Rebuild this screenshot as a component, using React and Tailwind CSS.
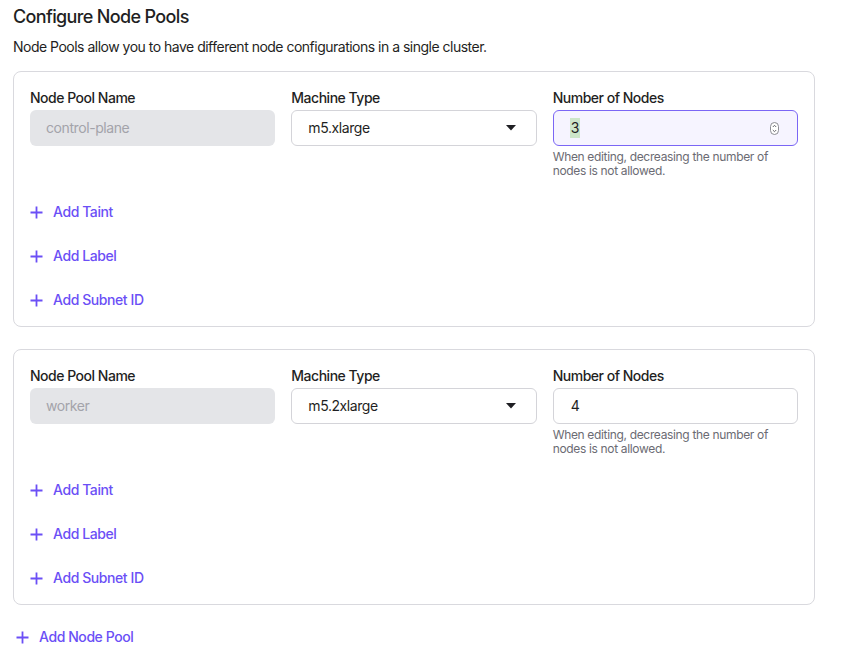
import React from "react";

const pools = [
  { name: "control-plane", machine: "m5.xlarge", nodes: "3", focused: true },
  { name: "worker", machine: "m5.2xlarge", nodes: "4", focused: false },
];

const actions = ["Add Taint", "Add Label", "Add Subnet ID"];

const Plus = () => (
  <svg width="13" height="13" viewBox="0 0 13 13" fill="none">
    <path d="M6.5 0.5v12M0.5 6.5h12" stroke="#6b4ff6" strokeWidth="1.8" />
  </svg>
);

const AddButton = ({ label }) => (
  <button className="flex h-5 w-fit items-center gap-[10px] text-sm font-medium tracking-[-0.03em] text-[#6b4ff6]">
    <Plus />
    {label}
  </button>
);

const Spinner = () => (
  <div className="flex h-[13px] w-[9px] flex-col items-center justify-center rounded-full border border-[#8d8d94] bg-white">
    <svg width="5" height="9" viewBox="0 0 5 9" fill="none">
      <path d="M0.8 3L2.5 1.3L4.2 3M0.8 6L2.5 7.7L4.2 6" stroke="#55555c" strokeWidth="0.9" />
    </svg>
  </div>
);

const PoolCard = ({ pool }) => (
  <div className="flex w-[802px] flex-col gap-6 rounded-lg border border-[#d9d9de] bg-white p-4">
    <div className="grid grid-cols-3 gap-4">
      <div className="flex flex-col">
        <label className="h-5 text-sm font-medium leading-5 tracking-[-0.035em] text-[#1f1f23]">Node Pool Name</label>
        <div className="mt-0.5 flex h-9 items-center rounded-md bg-[#e4e5e8] px-4 text-sm tracking-[-0.03em] text-[#a3a3aa]">
          {pool.name}
        </div>
      </div>
      <div className="flex flex-col">
        <label className="h-5 text-sm font-medium leading-5 tracking-[-0.035em] text-[#1f1f23]">Machine Type</label>
        <div className="mt-0.5 flex h-9 items-center justify-between rounded-md border border-[#d4d4d9] bg-white pl-4 pr-5 text-sm tracking-[-0.03em] text-[#1f1f23]">
          {pool.machine}
          <svg width="10" height="6" viewBox="0 0 10 6">
            <path d="M0 0h10L5 5.5z" fill="#1f1f23" />
          </svg>
        </div>
      </div>
      <div className="flex flex-col">
        <label className="h-5 text-sm font-medium leading-5 tracking-[-0.035em] text-[#1f1f23]">Number of Nodes</label>
        {pool.focused ? (
          <div className="mt-0.5 flex h-9 items-center justify-between rounded-md border border-[#7b66f5] bg-[#f6f4ff] pl-4 pr-[18px] text-sm text-[#1f1f23]">
            <span className="bg-[#cde6c9] px-px">{pool.nodes}</span>
            <Spinner />
          </div>
        ) : (
          <div className="mt-0.5 flex h-9 items-center rounded-md border border-[#d4d4d9] bg-white pl-[17px] text-sm text-[#1f1f23]">
            {pool.nodes}
          </div>
        )}
        <p className="mt-1 text-xs leading-[14px] tracking-[-0.028em] text-[#6b6b73]">
          When editing, decreasing the number of
          <br />
          nodes is not allowed.
        </p>
      </div>
    </div>
    {actions.map((a) => (
      <AddButton key={a} label={a} />
    ))}
  </div>
);

export default function App() {
  return (
    <div className="min-h-screen bg-white px-[13px] pt-[3px] text-[#1f1f23]" style={{ fontFamily: "Inter, 'Noto Sans', sans-serif" }}>
      <h2 className="text-lg font-medium leading-7 tracking-[-0.036em]">Configure Node Pools</h2>
      <p className="mt-1.5 text-sm leading-5 tracking-[-0.036em]">
        Node Pools allow you to have different node configurations in a single cluster.
      </p>
      <div className="mt-3.5 flex flex-col gap-[22px]">
        {pools.map((p) => (
          <PoolCard key={p.name} pool={p} />
        ))}
      </div>
      <div className="mt-[22px] pl-[3px]">
        <AddButton label="Add Node Pool" />
      </div>
    </div>
  );
}
